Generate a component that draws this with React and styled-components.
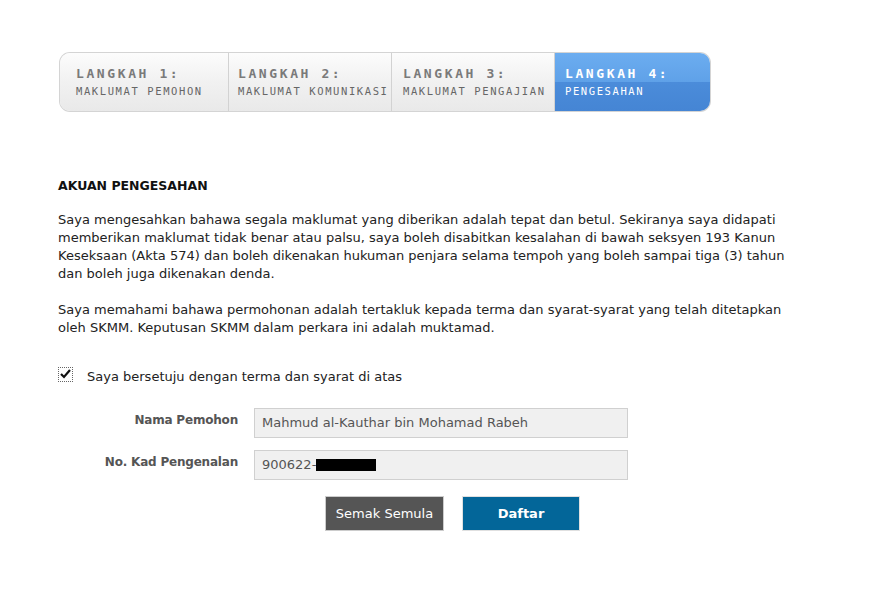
import React from "react";
import styled, { createGlobalStyle } from "styled-components";

const Global = createGlobalStyle`
  html, body { margin: 0; padding: 0; background: #fff; }
  body { font-family: Verdana, "DejaVu Sans", sans-serif; color: #222; }
`;

const Page = styled.div`
  width: 870px;
  height: 599px;
  padding: 53px 0 0 58px;
  box-sizing: border-box;
`;

const Stepper = styled.div`
  display: flex;
  width: 650px;
  height: 58px;
  margin-left: 2px;
  border-radius: 10px;
  overflow: hidden;
  box-shadow: 0 0 0 1px #d4d4d4;
`;

const Step = styled.div`
  width: ${(p) => p.$w}px;
  box-sizing: border-box;
  padding: 13px 0 0 ${(p) => p.$pad}px;
  border-left: ${(p) => (p.$first ? "none" : "1px solid #d2d2d2")};
  background: ${(p) =>
    p.$active
      ? "linear-gradient(#6cadf0 0%, #5fa1e8 50%, #4b8cda 50%, #4585d4 100%)"
      : "linear-gradient(#fcfcfc 0%, #f1f1f1 50%, #e9e9e9 100%)"};
  color: ${(p) => (p.$active ? "#fff" : "#7a7a7a")};
  font-family: "DejaVu Sans Mono", monospace;
  white-space: nowrap;
`;

const StepTitle = styled.div`
  font-size: 13px;
  font-weight: bold;
  letter-spacing: 2.6px;
  line-height: 15px;
`;

const StepSub = styled.div`
  margin-top: 4px;
  font-size: 10.5px;
  letter-spacing: 1.6px;
  line-height: 12px;
  color: ${(p) => (p.$active ? "#fff" : "#666")};
`;

const Content = styled.div`
  width: 730px;
  padding-top: 66px;
  font-size: 13px;
  line-height: 18px;
`;

const Heading = styled.div`
  font-weight: bold;
  font-size: 12.5px;
  color: #111;
  margin-bottom: 16px;
`;

const Para = styled.p`
  margin: 0 0 18px 0;
`;

const CheckRow = styled.label`
  display: flex;
  align-items: center;
  gap: 14px;
  margin-top: 31px;
`;

const Box = styled.span`
  width: 13px;
  height: 13px;
  border: 1px dotted #666;
  display: inline-flex;
  align-items: center;
  justify-content: center;
  margin-top: -6px;
`;

const Form = styled.div`
  margin-top: 22px;
  display: grid;
  grid-template-columns: 180px 374px;
  column-gap: 16px;
  row-gap: 12px;
`;

const Label = styled.div`
  text-align: right;
  font-weight: bold;
  color: #555;
  font-size: 12px;
  letter-spacing: -0.2px;
  padding-top: 3px;
`;

const Field = styled.div`
  height: 30px;
  box-sizing: border-box;
  border: 1px solid #d0d0d0;
  background: #f0f0f0;
  color: #555;
  padding: 0 7px;
  display: flex;
  align-items: center;
`;

const Redact = styled.span`
  display: inline-block;
  width: 60px;
  height: 12px;
  background: #000;
`;

const Buttons = styled.div`
  display: flex;
  gap: 18px;
  margin: 16px 0 0 267px;
`;

const Button = styled.button`
  width: ${(p) => p.$w}px;
  height: 35px;
  border: 1px solid ${(p) => (p.$primary ? "#e0e0e0" : "#ccc")};
  background: ${(p) => (p.$primary ? "#036699" : "#555")};
  color: #fff;
  font-family: inherit;
  font-size: 13px;
  font-weight: ${(p) => (p.$primary ? "bold" : "normal")};
`;

const steps = [
  { t: "LANGKAH 1:", s: "MAKLUMAT PEMOHON", w: 168, pad: 16 },
  { t: "LANGKAH 2:", s: "MAKLUMAT KOMUNIKASI", w: 163, pad: 9 },
  { t: "LANGKAH 3:", s: "MAKLUMAT PENGAJIAN", w: 163, pad: 11 },
  { t: "LANGKAH 4:", s: "PENGESAHAN", w: 156, pad: 10, active: true },
];

export default function App() {
  return (
    <Page>
      <Global />
      <Stepper>
        {steps.map((st, i) => (
          <Step key={i} $w={st.w} $pad={st.pad} $first={i === 0} $active={st.active}>
            <StepTitle>{st.t}</StepTitle>
            <StepSub $active={st.active}>{st.s}</StepSub>
          </Step>
        ))}
      </Stepper>
      <Content>
        <Heading>AKUAN PENGESAHAN</Heading>
        <Para>
          Saya mengesahkan bahawa segala maklumat yang diberikan adalah tepat dan betul. Sekiranya saya didapati
          memberikan maklumat tidak benar atau palsu, saya boleh disabitkan kesalahan di bawah seksyen 193 Kanun
          Keseksaan (Akta 574) dan boleh dikenakan hukuman penjara selama tempoh yang boleh sampai tiga (3) tahun
          dan boleh juga dikenakan denda.
        </Para>
        <Para>
          Saya memahami bahawa permohonan adalah tertakluk kepada terma dan syarat-syarat yang telah ditetapkan
          oleh SKMM. Keputusan SKMM dalam perkara ini adalah muktamad.
        </Para>
        <CheckRow>
          <Box>
            <svg width="11" height="10" viewBox="0 0 11 10">
              <path d="M1 5 L4 8 L10 1" stroke="#111" strokeWidth="2.2" fill="none" />
            </svg>
          </Box>
          Saya bersetuju dengan terma dan syarat di atas
        </CheckRow>
        <Form>
          <Label>Nama Pemohon</Label>
          <Field>Mahmud al-Kauthar bin Mohamad Rabeh</Field>
          <Label>No. Kad Pengenalan</Label>
          <Field>
            900622-<Redact />
          </Field>
        </Form>
        <Buttons>
          <Button $w={119}>Semak Semula</Button>
          <Button $w={118} $primary>Daftar</Button>
        </Buttons>
      </Content>
    </Page>
  );
}
